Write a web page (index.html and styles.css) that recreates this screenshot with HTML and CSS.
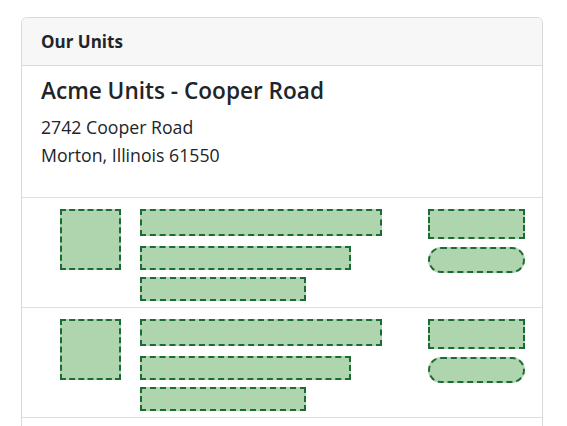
FILE: index.html
```html
<!DOCTYPE html>
<html lang="en">
<head>
  <meta charset="UTF-8">
  <meta name="viewport" content="width=device-width, initial-scale=1.0">
  <title>Our Units</title>
  <link rel="stylesheet" href="styles.css">
</head>
<body>
  <div class="page">
    <div class="card">
      <div class="card-header">Our Units</div>
      <div class="card-body">
        <h4 class="title">Acme Units - Cooper Road</h4>
        <p class="address">2742 Cooper Road<br>Morton, Illinois 61550</p>
      </div>
      <ul class="units">
        <li class="unit">
          <div class="ph ph-thumb"></div>
          <div class="unit-info">
            <div class="ph ph-line line-1"></div>
            <div class="ph ph-line line-2"></div>
            <div class="ph ph-line line-3"></div>
          </div>
          <div class="unit-side">
            <div class="ph ph-price"></div>
            <div class="ph ph-btn"></div>
          </div>
        </li>
        <li class="unit">
          <div class="ph ph-thumb"></div>
          <div class="unit-info">
            <div class="ph ph-line line-1"></div>
            <div class="ph ph-line line-2"></div>
            <div class="ph ph-line line-3"></div>
          </div>
          <div class="unit-side">
            <div class="ph ph-price"></div>
            <div class="ph ph-btn"></div>
          </div>
        </li>
        <li class="unit">
          <div class="ph ph-thumb"></div>
          <div class="unit-info">
            <div class="ph ph-line line-1"></div>
            <div class="ph ph-line line-2"></div>
            <div class="ph ph-line line-3"></div>
          </div>
          <div class="unit-side">
            <div class="ph ph-price"></div>
            <div class="ph ph-btn"></div>
          </div>
        </li>
      </ul>
    </div>
  </div>
</body>
</html>
```

FILE: styles.css
```css
  body{
    margin: 0;
    font-family: "Open Sans", "Noto Sans", sans-serif;
    color: #212529;
    background-color: #fff;
  }
  .page{
    padding: 17px 24px 0 21px;
  }
  .card{
    border: 1px solid #d9d9d9;
    border-radius: 6px;
    background-color: #fff;
  }
  .card-header{
    padding: 12px 19px 11px;
    height: 24px;
    line-height: 24px;
    font-size: 17px;
    font-weight: 700;
    background-color: #f7f7f7;
    border-bottom: 1px solid #d9d9d9;
    border-radius: 6px 6px 0 0;
  }
  .card-body{
    padding: 9px 19px 0;
    height: 122px;
  }
  .card-body .title{
    margin: 0 0 6px;
    font-size: 22.6px;
    font-weight: 600;
    line-height: 32px;
  }
  .card-body .address{
    margin: 0;
    font-size: 17.7px;
    line-height: 28.3px;
  }

  .units{
    margin: 0;
    padding: 0;
    list-style: none;
  }
  .unit{
    display: flex;
    gap: 19px;
    padding: 11px 17px 6px 38px;
    border-top: 1px solid #dfdfdf;
  }
  .ph{
    box-sizing: border-box;
    background-color: #aed5ae;
    border: 2px dashed #1c6a36;
  }
  .ph-thumb{
    width: 61px;
    height: 61px;
  }
  .unit-info{
    flex: 1;
  }
  .ph-line{
    height: 24px;
    margin-bottom: 7px;
  }
  .ph-line.line-1{
    width: 242px;
    height: 27px;
    margin-bottom: 10px;
  }
  .ph-line.line-2{
    width: 211px;
  }
  .ph-line.line-3{
    width: 166px;
    margin-bottom: 0;
  }
  .unit-side{
    width: 97px;
  }
  .ph-price{
    height: 30px;
    margin-bottom: 8px;
  }
  .ph-btn{
    height: 26px;
    border-radius: 13px;
  }
```
